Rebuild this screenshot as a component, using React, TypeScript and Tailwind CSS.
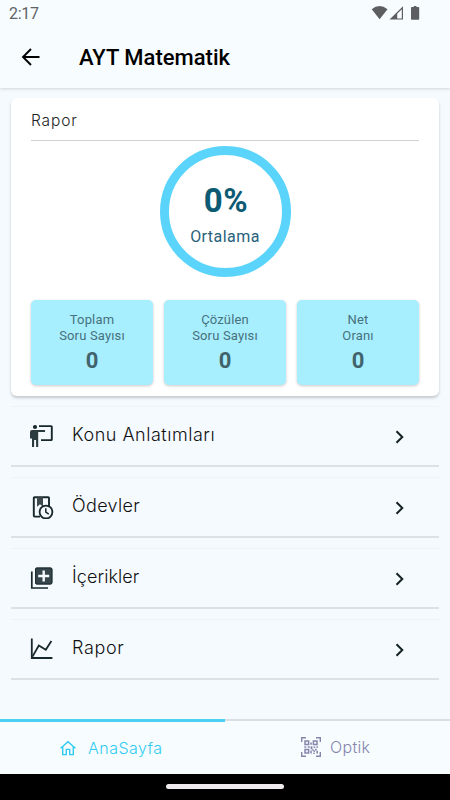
import type { ReactNode } from 'react'

interface Stat {
  top: string
  bottom: string
  value: number
}

interface MenuItem {
  label: string
  icon: ReactNode
  textClass: string
}

const stats: Stat[] = [
  { top: 'Toplam', bottom: 'Soru Sayısı', value: 0 },
  { top: 'Çözülen', bottom: 'Soru Sayısı', value: 0 },
  { top: 'Net', bottom: 'Oranı', value: 0 },
]

function TeacherIcon() {
  return (
    <svg width="24" height="24" viewBox="0 0 24 24" fill="none">
      <circle cx="5" cy="3" r="2.1" fill="#17282c" />
      <path d="M2 6h13v2H8.2v15H6.1v-7H4.1v7H2v-8.4H0V8a2 2 0 0 1 2-2Z" fill="#2b3a3e" />
      <path d="M9 2.1h12.2q.6 0 .6.6v12.8q0 .6-.6.6H11" stroke="#17282c" strokeWidth="1.9" strokeLinejoin="round" />
    </svg>
  )
}

function HomeworkIcon() {
  return (
    <svg width="24" height="24" viewBox="0 0 24 24" fill="none">
      <path d="M10 21.6H4.6q-.8 0-.8-.8V3q0-.8.8-.8h13.6q.8 0 .8.8v8" stroke="#17282c" strokeWidth="1.9" />
      <path d="M7 2.2h6v9.5L10 9.2l-3 2.5Z" fill="#3c494d" />
      <circle cx="16" cy="17" r="6.4" fill="#f5faff" stroke="#17282c" strokeWidth="1.8" />
      <path d="M15.8 13.2v4l3 2" stroke="#17282c" strokeWidth="1.5" />
    </svg>
  )
}

function AddContentIcon() {
  return (
    <svg width="24" height="24" viewBox="0 0 24 24" fill="none">
      <rect x="5" y="1.5" width="17.4" height="17" rx="1.8" fill="#36454a" />
      <rect x="5.5" y="2" width="16.4" height="16" rx="1.4" stroke="#1d2c30" />
      <path d="M13.7 4.5v11M8.2 10h11" stroke="#f5faff" strokeWidth="2.4" />
      <path d="M1.8 5.5V22H18" stroke="#17282c" strokeWidth="1.7" />
    </svg>
  )
}

function ChartIcon() {
  return (
    <svg width="24" height="24" viewBox="0 0 24 24" fill="none">
      <path d="M1.8 1.5V21H22.4" stroke="#17282c" strokeWidth="1.8" />
      <path d="M2.5 19.6 8.8 8.6l7 4.2 5.6-8.8" stroke="#17282c" strokeWidth="1.8" />
    </svg>
  )
}

function HomeIcon() {
  return (
    <svg width="16" height="16" viewBox="0 0 16 16" fill="none" stroke="#2fcbf0" strokeWidth="1.4">
      <path d="M.6 8.2 8 1.7l7.4 6.5M2.7 7v7.6h3.6V9.4h3.4v5.2h3.6V7" />
    </svg>
  )
}

function QrIcon() {
  return (
    <svg width="20" height="20" viewBox="0 0 20 20" fill="none" stroke="#8585ad">
      <path d="M.7 5V.7H5M15 .7h4.3V5M19.3 15v4.3H15M5 19.3H.7V15" strokeWidth="1.4" />
      <path d="M4 4h3.6v3.6H4zM12.4 4H16v3.6h-3.6zM4 12.4h3.6V16H4z" strokeWidth="1.5" />
      <path
        d="M9.2 5.5h1.6v2.2H9.2zM3.3 9.2h2v1.6h-2zM6.8 9.2h2v1.6h-2zM9.6 9.2h1.8v3H9.6zM12.6 9.5h1.6v1.6h-1.6zM15.4 9.2H17v1.6h-1.6zM11.2 12.2h1.5v1.5h-1.5zM14 11.7h1.7v1.7H14zM9.3 13.6h1.5v3H9.3zM12.5 13.6H14v1.5h-1.5zM15.4 13.8H17v2.8h-1.6zM12 15.8h2v1h-2z"
        fill="#8585ad"
        stroke="none"
      />
    </svg>
  )
}

const menu: MenuItem[] = [
  { label: 'Konu Anlatımları', icon: <TeacherIcon />, textClass: 'tracking-[0.029em]' },
  { label: 'Ödevler', icon: <HomeworkIcon />, textClass: 'tracking-[0.018em]' },
  { label: 'İçerikler', icon: <AddContentIcon />, textClass: 'tracking-[0.004em]' },
  { label: 'Rapor', icon: <ChartIcon />, textClass: 'tracking-[0.035em]' },
]

function StatusBar() {
  return (
    <div className="flex h-7 items-start justify-between pl-[9px] pr-[30px] pt-[4px] text-[#606365]">
      <span className="font-['Roboto',sans-serif] text-[16px] leading-5 tracking-[-0.02em]">2:17</span>
      <svg width="49" height="16" viewBox="0 0 49 16" className="mt-px" fill="#5c5e60">
        <path d="M.7 4.2Q8.5-2.2 16.5 4.2L8.6 14.2Z" />
        <path fillRule="evenodd" d="M32 1.2v13.4H18.5ZM30.8 4.2l-4.6 4.6v4.8h4.6Z" />
        <path d="M40.8 2h2V1h2.6v1h2q.8 0 .8.8V14q0 .8-.8.8h-6.6q-.8 0-.8-.8V2.8q0-.8.8-.8Z" />
      </svg>
    </div>
  )
}

function ReportCard() {
  return (
    <section className="mx-[11px] mt-[10px] h-[298px] rounded-[6px] bg-white px-5 shadow-[0_2px_3px_rgba(0,0,0,0.2)]">
      <h2 className="h-[43px] border-b border-[#cfd1d2] pt-[11px] font-['Inter',sans-serif] text-[15.5px] font-light leading-6 tracking-[0.055em] text-[#202425]">
        Rapor
      </h2>
      <div className="mx-auto mt-[5px] flex size-[131px] flex-col items-center rounded-full border-[9px] border-[#5bd4fb] pt-[27px] font-['Roboto',sans-serif] text-[#0c5a73]">
        <span className="ml-[2px] text-[33px] font-bold leading-[38px] tracking-[0.02em]">0%</span>
        <span className="mt-[7px] text-[16px] leading-5 tracking-[0.028em] text-[#28617b]">Ortalama</span>
      </div>
      <div className="mt-[23px] grid grid-cols-3 gap-[11px]">
        {stats.map((s) => (
          <div
            key={s.top}
            className="flex h-[85px] flex-col items-center rounded-[5px] bg-[#a7eeff] pt-[12px] font-['Roboto',sans-serif] text-[13px] leading-4 tracking-[0.012em] text-[#47727c] shadow-[0_1px_3px_rgba(0,0,0,0.22)]"
          >
            <span>{s.top}</span>
            <span>{s.bottom}</span>
            <span className="mt-[3px] text-[22px] font-bold leading-7 tracking-normal text-[#40636c]">{s.value}</span>
          </div>
        ))}
      </div>
    </section>
  )
}

export default function App() {
  return (
    <div className="flex h-[800px] w-[450px] flex-col overflow-hidden bg-[#f5faff]">
      <header className="h-[88px] shrink-0 bg-[#f7fcff] shadow-[0_1px_3px_rgba(0,0,0,0.15)]">
        <StatusBar />
        <div className="flex h-[59px] items-center pl-[21px]">
          <svg width="19" height="18" viewBox="0 0 19 18" fill="none" stroke="#000" strokeWidth="1.9" className="-mt-[2px]">
            <path d="M18.5 9H2M10 1 2 9l8 8" />
          </svg>
          <h1 className="ml-[39px] whitespace-nowrap font-['Roboto',sans-serif] text-[22px] font-medium text-black">
            AYT Matematik
          </h1>
        </div>
      </header>

      <ReportCard />

      <ul className="mx-[11px] mt-[10px] flex flex-col gap-[10px]">
        {menu.map((item) => (
          <li
            key={item.label}
            className="flex h-[61px] items-center border-b-2 border-t border-b-[#dce1e6] border-t-[#eff3f7] pl-[19px] pr-[33px]"
          >
            <span className="shrink-0">{item.icon}</span>
            <span
              className={`-mt-[2px] ml-[18px] flex-1 whitespace-nowrap font-['Inter',sans-serif] text-[18px] font-light leading-6 text-[#111] ${item.textClass}`}
            >
              {item.label}
            </span>
            <svg width="12" height="14" viewBox="0 0 12 14" fill="none" stroke="#142125" strokeWidth="2" className="mt-px">
              <path d="m2.5 1.2 5.8 5.8-5.8 5.8" />
            </svg>
          </li>
        ))}
      </ul>

      <nav className="mt-auto grid h-[55px] shrink-0 grid-cols-2 bg-[#f7fcff] font-['Inter',sans-serif] text-[16px] font-light">
        <div className="flex items-center border-t-[3px] border-[#4bcff2] pl-[60px] text-[#2fcbf0]">
          <HomeIcon />
          <span className="ml-[12px] tracking-[0.03em]">AnaSayfa</span>
        </div>
        <div className="flex items-center border-t-2 border-[#dadee5] pb-[2px] pl-[76px] text-[#8585ad]">
          <QrIcon />
          <span className="ml-[9px] tracking-[0.02em]">Optik</span>
        </div>
      </nav>
      <div className="flex h-[26px] shrink-0 justify-center bg-black pt-[10px]">
        <div className="h-[5px] w-[118px] rounded-full bg-[#eeeaed]" />
      </div>
    </div>
  )
}
